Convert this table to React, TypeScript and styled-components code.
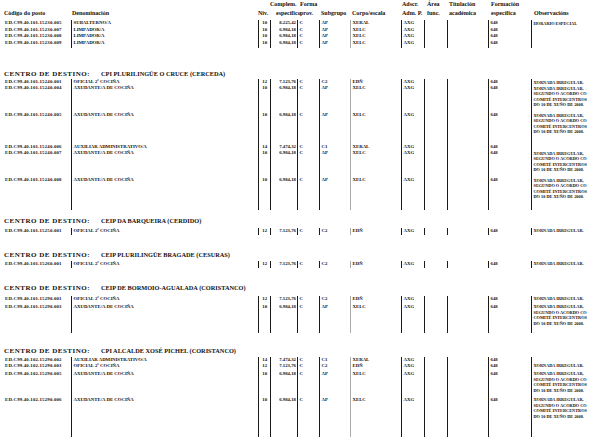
import styled, { createGlobalStyle } from "styled-components";

const COLS = "67px 187px 12px 27px 22px 31px 51px 23px 23px 41px 43px 85px";

const GlobalStyle = createGlobalStyle`
    * { box-sizing: border-box; }
    body {
        margin: 0;
        background: #fff;
    }
`;

const Page = styled.div`
    width: 616px;
    height: 439px;
    overflow: hidden;
    padding-left: 4px;
    font-family: "Liberation Serif", "Times New Roman", serif;
    font-weight: bold;
    color: #101010;
`;

const HeadRow = styled.div`
    display: grid;
    grid-template-columns: ${COLS};
    height: 18px;
    font-size: 6px;
    line-height: 9px;
    white-space: nowrap;
`;

const HeadCell = styled.div<{ $shift?: number }>`
    padding-left: ${p => p.$shift ?? 1}px;
`;

const Block = styled.div<{ $mt: number }>`
    margin-top: ${p => p.$mt}px;
`;

const Heading = styled.div<{ $gap: number }>`
    height: 10px;
    margin-bottom: ${p => p.$gap}px;
    font-size: 7px;
    line-height: 10px;
    white-space: nowrap;
`;

const HeadLabel = styled.span`
    letter-spacing: 0.5px;
`;

const HeadName = styled.span`
    margin-left: 11px;
    font-size: 6.3px;
`;

const Row = styled.div<{ $h: number }>`
    display: grid;
    grid-template-columns: ${COLS};
    height: ${p => p.$h}px;
    font-size: 4.8px;
    line-height: 6.5px;
`;

const Cell = styled.div<{ $line?: "dark" | "light" | "none"; $align?: "left" | "center" | "right" }>`
    border-left: 1px solid
        ${p => (p.$line === "light" ? "#a9a9a9" : p.$line === "none" ? "transparent" : "#1a1a1a")};
    padding: 0 1px 0 1.5px;
    text-align: ${p => p.$align ?? "left"};
    white-space: nowrap;
`;

const Code = styled(Cell)`
    padding-left: 0;
    letter-spacing: 0.2px;
`;

const Obs = styled(Cell)`
    font-size: 4.3px;
    line-height: 5.6px;
    padding-top: 0.5px;
`;

type Post = {
    code: string;
    denom: string;
    niv: string;
    comp: string;
    sub: string;
    corpo: string;
    obs: string[];
    h: number;
};

const IRREG = ["XORNADA IRREGULAR."];
const ACORDO = [
    "XORNADA IRREGULAR,",
    "SEGUNDO O ACORDO CO",
    "COMITÉ INTERCENTROS",
    "DO 10 DE XUÑO DE 2008.",
];

const oficial = (code: string, h: number): Post => ({
    code, denom: "OFICIAL 2ª COCIÑA", niv: "12", comp: "7.123,76", sub: "C2", corpo: "EDÑ", obs: IRREG, h,
});
const axudante = (code: string, h: number): Post => ({
    code, denom: "AXUDANTE/A DE COCIÑA", niv: "10", comp: "6.984,18", sub: "AP", corpo: "XELC", obs: ACORDO, h,
});
const auxiliar = (code: string, h: number): Post => ({
    code, denom: "AUXILIAR ADMINISTRATIVO/A", niv: "14", comp: "7.474,32", sub: "C1", corpo: "XERAL", obs: [], h,
});
const limpador = (code: string, h: number): Post => ({
    code, denom: "LIMPADOR/A", niv: "10", comp: "6.984,18", sub: "AP", corpo: "XELC", obs: [], h,
});

const first: Post[] = [
    {
        code: "ED.C99.40.101.15230.005", denom: "SUBALTERNO/A", niv: "10", comp: "8.225,42",
        sub: "AP", corpo: "XERAL", obs: ["HORARIO ESPECIAL"], h: 6.5,
    },
    limpador("ED.C99.40.101.15230.007", 6.5),
    limpador("ED.C99.40.101.15230.008", 6.5),
    limpador("ED.C99.40.101.15230.009", 8.5),
];

const sections: { name: string; mt: number; gap: number; posts: Post[] }[] = [
    {
        name: "CPI PLURILINGÜE O CRUCE (CERCEDA)",
        mt: 21,
        gap: 0,
        posts: [
            oficial("ED.C99.40.101.15240.001", 6),
            axudante("ED.C99.40.101.15240.004", 27),
            axudante("ED.C99.40.101.15240.005", 32),
            auxiliar("ED.C99.40.101.15240.006", 6),
            axudante("ED.C99.40.101.15240.007", 27),
            axudante("ED.C99.40.101.15240.008", 33),
        ],
    },
    {
        name: "CEIP DA BARQUEIRA (CERDIDO)",
        mt: 6,
        gap: 1.75,
        posts: [oficial("ED.C99.40.101.15250.001", 7.5)],
    },
    {
        name: "CEIP PLURILINGÜE BRAGADE (CESURAS)",
        mt: 14.75,
        gap: 0.75,
        posts: [oficial("ED.C99.40.101.15260.001", 7.5)],
    },
    {
        name: "CEIP DE BORMOIO-AGUALADA (CORISTANCO)",
        mt: 14.75,
        gap: 2.75,
        posts: [
            oficial("ED.C99.40.101.15290.001", 8),
            axudante("ED.C99.40.101.15290.003", 29.25),
        ],
    },
    {
        name: "CPI ALCALDE XOSÉ PICHEL (CORISTANCO)",
        mt: 13,
        gap: 0.75,
        posts: [
            auxiliar("ED.C99.40.102.15290.002", 6),
            oficial("ED.C99.40.102.15290.003", 8),
            axudante("ED.C99.40.102.15290.005", 26),
            axudante("ED.C99.40.102.15290.006", 40),
        ],
    },
];

function PostRow({ post }: { post: Post }) {
    return (
        <Row $h={post.h}>
            <Code $line="none">{post.code}</Code>
            <Cell>{post.denom}</Cell>
            <Cell $align="center">{post.niv}</Cell>
            <Cell $align="right">{post.comp}</Cell>
            <Cell>C</Cell>
            <Cell>{post.sub}</Cell>
            <Cell $line="light">{post.corpo}</Cell>
            <Cell>AXG</Cell>
            <Cell />
            <Cell />
            <Cell>648</Cell>
            <Obs>
                {post.obs.map(l => (
                    <div key={l}>{l}</div>
                ))}
            </Obs>
        </Row>
    );
}

export default function App() {
    return (
        <Page>
            <GlobalStyle />
            <HeadRow>
                <HeadCell $shift={0}>
                    <br />
                    Código do posto
                </HeadCell>
                <HeadCell>
                    <br />
                    Denominación
                </HeadCell>
                <HeadCell $shift={0}>
                    <br />
                    Niv.
                </HeadCell>
                <HeadCell $shift={-7}>
                    Complem.
                    <br />
                    <span style={{ marginLeft: 6 }}>específico</span>
                </HeadCell>
                <HeadCell $shift={3}>
                    Forma
                    <br />
                    prov.
                </HeadCell>
                <HeadCell $shift={2}>
                    <br />
                    Subgrupo
                </HeadCell>
                <HeadCell $shift={2}>
                    <br />
                    Corpo/escala
                </HeadCell>
                <HeadCell>
                    Adscr.
                    <br />
                    Adm. P.
                </HeadCell>
                <HeadCell $shift={3}>
                    Área
                    <br />
                    func.
                </HeadCell>
                <HeadCell $shift={2}>
                    Titulación
                    <br />
                    académica
                </HeadCell>
                <HeadCell $shift={3}>
                    Formación
                    <br />
                    específica
                </HeadCell>
                <HeadCell $shift={3}>
                    <br />
                    Observacións
                </HeadCell>
            </HeadRow>

            <Block $mt={2}>
                {first.map(p => (
                    <PostRow key={p.code} post={p} />
                ))}
            </Block>

            {sections.map(s => (
                <Block key={s.name} $mt={s.mt}>
                    <Heading $gap={s.gap}>
                        <HeadLabel>CENTRO DE DESTINO:</HeadLabel>
                        <HeadName>{s.name}</HeadName>
                    </Heading>
                    {s.posts.map(p => (
                        <PostRow key={p.code} post={p} />
                    ))}
                </Block>
            ))}
        </Page>
    );
}
